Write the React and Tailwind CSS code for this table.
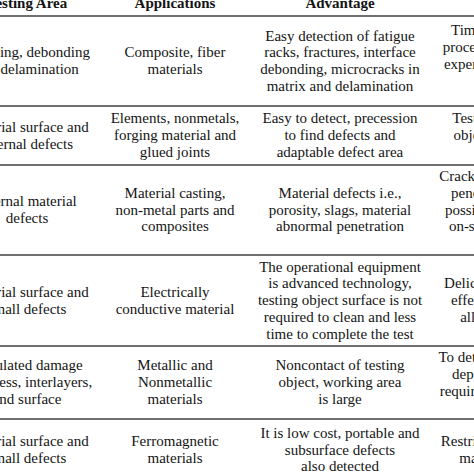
import React from "react";

const rows = [
  {
    h: "h-[90px]",
    cells: [
      ["Cracking, debonding", "and delamination"],
      ["Composite, fiber", "materials"],
      ["Easy detection of fatigue", "racks, fractures, interface", "debonding, microcracks in", "matrix and delamination"],
      ["Time-consuming", "process, requires an", "experienced person", "only"],
    ],
    last: "pb-[11px]",
  },
  {
    h: "h-[59px]",
    cells: [
      ["Material surface and", "internal defects"],
      ["Elements, nonmetals,", "forging material and", "glued joints"],
      ["Easy to detect, precession", "to find defects and", "adaptable defect area"],
      ["Testing complex", "object geometry", "is hard"],
    ],
  },
  {
    h: "h-[90px]",
    cells: [
      ["Internal material", "defects"],
      ["Material casting,", "non-metal parts and", "composites"],
      ["Material defects i.e.,", "porosity, slags, material", "abnormal penetration"],
      ["Cracks must be open", "penetrate surface", "possible hazard for", "on-site inspection", "test"],
    ],
  },
  {
    h: "h-[91px]",
    cells: [
      ["Material surface and", "small defects"],
      ["Electrically", "conductive material"],
      ["The operational equipment", "is advanced technology,", "testing object surface is not", "required to clean and less", "time to complete the test"],
      ["Delicate probes are", "effected by noise", "all-round care"],
    ],
  },
  {
    h: "h-[73px]",
    cells: [
      ["Simulated damage", "thickness, interlayers,", "and surface"],
      ["Metallic and", "Nonmetallic", "materials"],
      ["Noncontact of testing", "object, working area", "is large"],
      ["To detect defects, the", "depth of damage", "required high energy", "source"],
    ],
  },
  {
    h: "h-[60px]",
    cells: [
      ["Material surface and", "small defects"],
      ["Ferromagnetic", "materials"],
      ["It is low cost, portable and", "subsurface defects", "also detected"],
      ["Restricted to ferrous", "materials only"],
    ],
    noBorder: true,
  },
];

function Cell({ lines, extra = "" }) {
  return (
    <div className={"flex flex-col items-center justify-center text-center whitespace-nowrap " + extra}>
      {lines.map((l, i) => (
        <span key={i}>{l}</span>
      ))}
    </div>
  );
}

export default function App() {
  return (
    <div className="w-[474px] h-[474px] overflow-hidden bg-white text-[#141414] font-['Liberation_Serif',serif] text-[15px] leading-[16.7px]">
      <div className="ml-[-46px] mt-[-8px] w-[620px]">
        {/* header */}
        <div className="grid grid-cols-[146px_150px_180px_144px] h-[25px] border-b-2 border-[#707070] font-bold">
          <div className="flex items-center justify-center">Testing Area</div>
          <div className="flex items-center justify-center">Applications</div>
          <div className="flex items-center justify-center">Advantage</div>
          <div></div>
        </div>

        {rows.map((r, i) => (
          <div
            key={i}
            className={
              "grid grid-cols-[146px_150px_180px_144px] " +
              r.h +
              (r.noBorder ? "" : " border-b-2 border-[#707070]")
            }
          >
            <Cell lines={r.cells[0]} />
            <Cell lines={r.cells[1]} />
            <Cell lines={r.cells[2]} />
            <Cell lines={r.cells[3]} extra={r.last || ""} />
          </div>
        ))}
      </div>
    </div>
  );
}
